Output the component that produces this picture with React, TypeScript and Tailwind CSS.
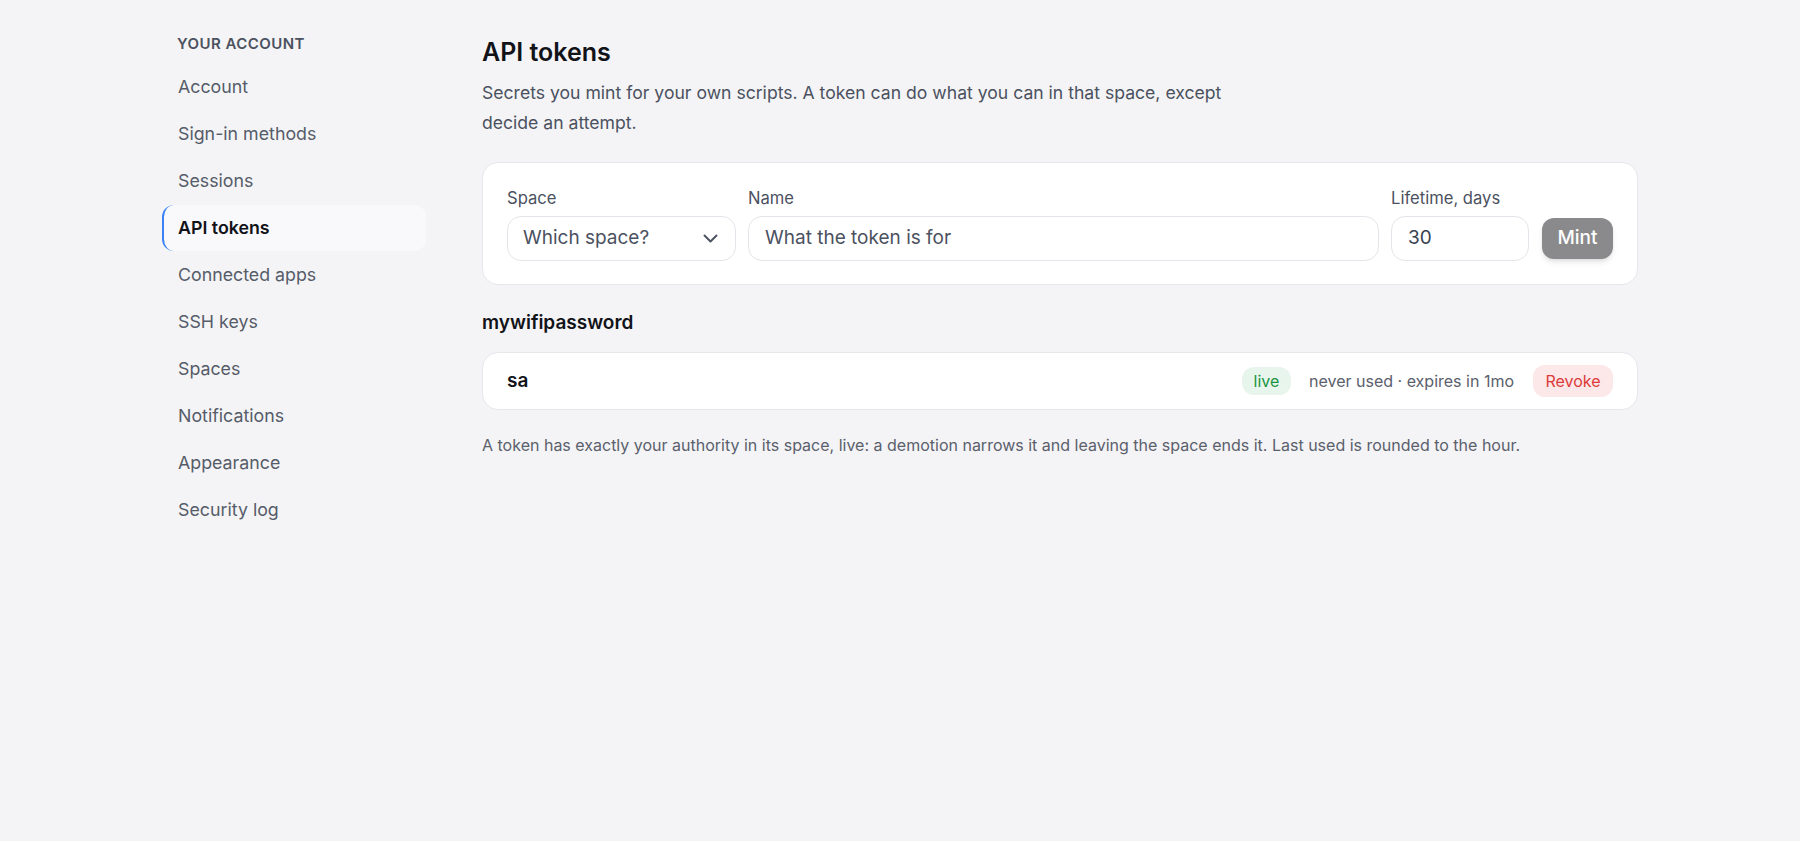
import React from "react"

const navItems = [
    "Account",
    "Sign-in methods",
    "Sessions",
    "API tokens",
    "Connected apps",
    "SSH keys",
    "Spaces",
    "Notifications",
    "Appearance",
    "Security log",
]

const Sidebar = () => {
    return (
        <aside className="w-[264px] shrink-0">
            <div className="mt-px pl-[15px] text-[15px] leading-5 font-semibold tracking-[0.03em] text-[#4b5160]">YOUR ACCOUNT</div>
            <nav className="mt-[10px] flex flex-col gap-px">
                {navItems.map((item) =>
                    item === "API tokens" ? (
                        <a key={item} className="flex h-[46px] items-center rounded-xl border-l-2 border-[#3b82f6] bg-[#f9f9fb] pl-[14px] text-[17.8px] font-semibold text-[#111318]">
                            {item}
                        </a>
                    ) : (
                        <a key={item} className="flex h-[46px] items-center pl-4 text-[17.8px] text-[#565c69]">
                            {item}
                        </a>
                    )
                )}
            </nav>
        </aside>
    )
}

const Chevron = () => (
    <svg width="15" height="9" viewBox="0 0 15 9" fill="none" className="mr-[2px]">
        <path d="M1.5 1.5 7.5 7.5 13.5 1.5" stroke="#4b5160" strokeWidth="1.9" strokeLinecap="round" strokeLinejoin="round" />
    </svg>
)

const MintForm = () => {
    return (
        <div className="mt-6 rounded-2xl border border-[#e6e7eb] bg-white px-6 pt-[25px] pb-[23px]">
            <div className="flex items-end gap-3">
                <label className="flex w-[229px] flex-col gap-2">
                    <span className="text-[16.6px] leading-5 text-[#4b5160]">Space</span>
                    <div className="flex h-[45px] items-center justify-between rounded-[14px] border-[1.5px] border-[#e4e5ea] bg-white pl-[15px] pr-[15px] text-[19px] text-[#4b5160]">
                        <span>Which space?</span>
                        <Chevron />
                    </div>
                </label>
                <label className="flex flex-1 flex-col gap-2">
                    <span className="text-[16.6px] leading-5 text-[#4b5160]">Name</span>
                    <div className="flex h-[45px] items-center rounded-[14px] border-[1.5px] border-[#e4e5ea] bg-white px-4 text-[19px] text-[#4b5160]">
                        What the token is for
                    </div>
                </label>
                <label className="flex w-[138px] flex-col gap-2">
                    <span className="text-[16.6px] leading-5 text-[#4b5160]">Lifetime, days</span>
                    <div className="flex h-[45px] items-center rounded-[14px] border-[1.5px] border-[#e4e5ea] bg-white px-4 text-[19px] text-[#374151]">
                        30
                    </div>
                </label>
                <div className="flex h-[45px] items-center pl-px">
                    <button className="h-[41px] w-[71px] rounded-xl bg-[#8a8a8c] text-[19px] font-medium text-white shadow-md">Mint</button>
                </div>
            </div>
        </div>
    )
}

const TokenRow = () => {
    return (
        <div className="mt-[17px] flex h-[58px] items-center rounded-2xl border border-[#e6e7eb] bg-white pl-6 pr-6">
            <span className="flex-1 text-[19px] font-semibold text-[#111318]">sa</span>
            <span className="flex h-[28px] w-[49px] items-center justify-center rounded-xl bg-[#e8f5ec] text-[16px] text-[#1a9442]">live</span>
            <span className="ml-[18px] text-[16px] text-[#5a606c]">never used · expires in 1mo</span>
            <button className="ml-[19px] h-[32px] w-[80px] rounded-xl bg-[#fce8e8] text-[16px] text-[#dc3a3a]">Revoke</button>
        </div>
    )
}

export default function App() {
    return (
        <div className="min-h-screen bg-[#f4f4f6] font-['Inter',sans-serif] antialiased">
            <div className="mx-auto flex w-[1476px] pt-[33px]">
                <Sidebar />
                <main className="ml-[56px] flex-1">
                    <h1 className="mt-[3px] text-[25px] leading-8 font-semibold text-[#111318]">API tokens</h1>
                    <p className="mt-[10px] max-w-[768px] text-[17.6px] leading-[30px] text-[#4b5160]">
                        Secrets you mint for your own scripts. A token can do what you can in that space, except decide an attempt.
                    </p>
                    <MintForm />
                    <h2 className="mt-[26px] text-[19px] leading-6 font-semibold text-[#111318]">mywifipassword</h2>
                    <TokenRow />
                    <p className="mt-[23px] text-[16px] leading-6 text-[#5a606c]">
                        A token has exactly your authority in its space, live: a demotion narrows it and leaving the space ends it. Last used is rounded to the hour.
                    </p>
                </main>
            </div>
        </div>
    )
}
